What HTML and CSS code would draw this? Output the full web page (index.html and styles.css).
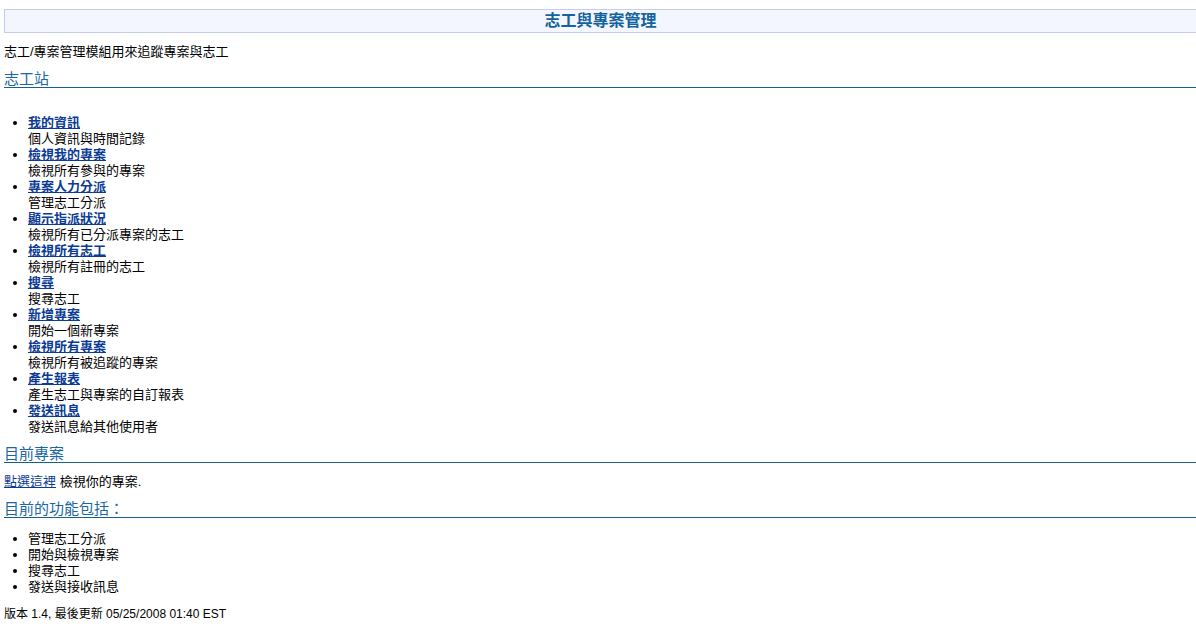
FILE: index.html
```html
<!DOCTYPE html>
<html lang="zh-Hant">
<head>
<meta charset="utf-8">
<title>志工與專案管理</title>
<link rel="stylesheet" href="styles.css">
</head>
<body>
<div class="title">志工與專案管理</div>
<p class="intro">志工/專案管理模組用來追蹤專案與志工</p>
<h2 class="section">志工站</h2>
<ul class="menu">
  <li><a href="#">我的資訊</a><br>個人資訊與時間記錄</li>
  <li><a href="#">檢視我的專案</a><br>檢視所有參與的專案</li>
  <li><a href="#">專案人力分派</a><br>管理志工分派</li>
  <li><a href="#">顯示指派狀況</a><br>檢視所有已分派專案的志工</li>
  <li><a href="#">檢視所有志工</a><br>檢視所有註冊的志工</li>
  <li><a href="#">搜尋</a><br>搜尋志工</li>
  <li><a href="#">新增專案</a><br>開始一個新專案</li>
  <li><a href="#">檢視所有專案</a><br>檢視所有被追蹤的專案</li>
  <li><a href="#">產生報表</a><br>產生志工與專案的自訂報表</li>
  <li><a href="#">發送訊息</a><br>發送訊息給其他使用者</li>
</ul>
<h2 class="section section-b">目前專案</h2>
<p class="line"><a class="plain" href="#">點選這裡</a> 檢視你的專案.</p>
<h2 class="section section-b">目前的功能包括：</h2>
<ul class="features">
  <li>管理志工分派</li>
  <li>開始與檢視專案</li>
  <li>搜尋志工</li>
  <li>發送與接收訊息</li>
</ul>
<p class="version">版本 1.4, 最後更新 05/25/2008 01:40 EST</p>
</body>
</html>
```

FILE: styles.css
```css
html, body {
  margin: 0;
  padding: 0;
  background: #ffffff;
}
body {
  padding: 9px 0 0 4px;
  font-family: "Liberation Sans", "Noto Sans CJK TC", sans-serif;
  font-size: 13px;
  line-height: 16px;
  color: #000000;
}
.title {
  height: 22px;
  line-height: 22px;
  background: #f3f6fe;
  border: 1px solid #c5cdee;
  border-right: 0;
  text-align: center;
  font-size: 16px;
  font-weight: bold;
  color: #15639c;
}
.intro {
  margin: 11px 0 0 0;
}
.section {
  margin: 10px 0 0 0;
  font-size: 15px;
  line-height: 17px;
  font-weight: normal;
  color: #1a67a3;
  border-bottom: 1px solid #1a5e8c;
}
.menu {
  margin: 27px 0 0 0;
  padding: 0 0 0 24px;
}
.menu a {
  color: #0b3b94;
  font-weight: bold;
}
.line {
  margin: 11px 0 0 0;
}
.plain {
  color: #0b3b94;
}
.features {
  margin: 13px 0 0 0;
  padding: 0 0 0 24px;
}
.version {
  margin: 11px 0 0 0;
  font-size: 12px;
}
```
